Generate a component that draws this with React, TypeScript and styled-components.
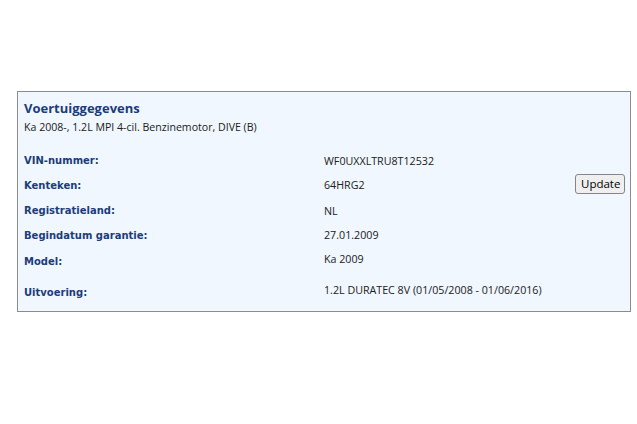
import React from "react";
import styled, { createGlobalStyle } from "styled-components";

const Global = createGlobalStyle`
  html, body { margin: 0; padding: 0; background: #ffffff; }
  body { font-family: "Open Sans", "Noto Sans", sans-serif; }
`;

const Page = styled.div`
  padding: 91px 0 0 17px;
`;

const Panel = styled.section`
  box-sizing: border-box;
  width: 614px;
  height: 221px;
  border: 1px solid #8c8c8c;
  background: #f0f7fe;
  padding: 7px 5px 0 6px;
`;

const Title = styled.h2`
  margin: 0;
  font-family: "Open Sans", sans-serif;
  font-weight: 700;
  font-size: 13px;
  line-height: 18px;
  color: #1c3c7a;
`;

const Subtitle = styled.div`
  font-family: "Open Sans", sans-serif;
  font-size: 10.6px;
  line-height: 16px;
  color: #202020;
  margin: 2px 0 13px;
`;

const Grid = styled.div`
  display: grid;
  grid-template-columns: 300px 1fr auto;
  align-items: center;
`;

const Label = styled.div<{ $h?: number }>`
  font-family: "DejaVu Sans", Verdana, sans-serif;
  font-weight: 700;
  font-size: 10px;
  color: #1c3c7a;
  height: ${(p) => p.$h ?? 25}px;
  display: flex;
  align-items: center;
`;

const Value = styled.div<{ $h?: number; $shift?: number }>`
  font-family: "Open Sans", sans-serif;
  font-size: 10.7px;
  color: #202020;
  height: ${(p) => p.$h ?? 25}px;
  display: flex;
  align-items: center;
  position: relative;
  top: ${(p) => p.$shift ?? 0}px;
`;

const Cell = styled.div`
  display: flex;
  align-items: center;
  justify-content: flex-end;
`;

const Button = styled.button`
  font-family: "Open Sans", sans-serif;
  font-size: 11.5px;
  color: #000;
  background: #efefef;
  border: 1px solid #858585;
  border-radius: 3px;
  padding: 0 5px;
  width: 50px;
  height: 20px;
  line-height: 18px;
  position: relative;
  top: -2px;
`;

const rows: { label: string; value: string; h?: number; shift?: number; button?: boolean }[] = [
  { label: "VIN-nummer:", value: "WF0UXXLTRU8T12532" },
  { label: "Kenteken:", value: "64HRG2", button: true, shift: -1 },
  { label: "Registratieland:", value: "NL" },
  { label: "Begindatum garantie:", value: "27.01.2009", shift: -1 },
  { label: "Model:", value: "Ka 2009", h: 27, shift: -3 },
  { label: "Uitvoering:", value: "1.2L DURATEC 8V (01/05/2008 - 01/06/2016)", h: 35, shift: -3 },
];

export default function App() {
  return (
    <Page>
      <Global />
      <Panel>
        <Title>Voertuiggegevens</Title>
        <Subtitle>Ka 2008-, 1.2L MPI 4-cil. Benzinemotor, DIVE (B)</Subtitle>
        <Grid>
          {rows.map((r) => (
            <React.Fragment key={r.label}>
              <Label $h={r.h}>{r.label}</Label>
              <Value $h={r.h} $shift={r.shift}>{r.value}</Value>
              <Cell>{r.button ? <Button>Update</Button> : null}</Cell>
            </React.Fragment>
          ))}
        </Grid>
      </Panel>
    </Page>
  );
}
